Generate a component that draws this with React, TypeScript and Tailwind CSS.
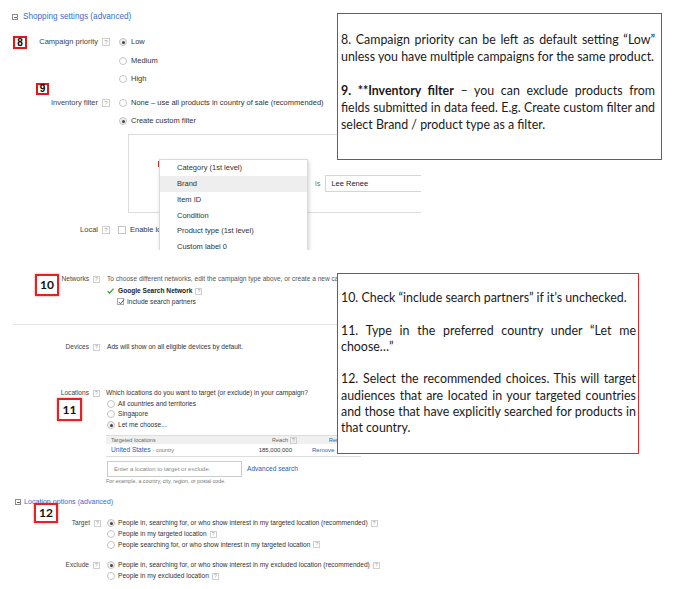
import React from "react";

const UI = "font-['Liberation_Sans',Arial,sans-serif]";
const NOTE = "font-['Lato','Open_Sans',sans-serif]";

function Q8() {
  return (
    <span className="inline-flex h-[8px] w-[8px] shrink-0 items-center justify-center border border-[#cfcfcf] text-[6px] leading-none text-[#9a9a9a]">
      ?
    </span>
  );
}

function Q7() {
  return (
    <span className="inline-flex h-[7px] w-[7px] shrink-0 items-center justify-center border border-[#cfcfcf] text-[5px] leading-none text-[#9a9a9a]">
      ?
    </span>
  );
}

function Radio({ on }: { on?: boolean }) {
  return (
    <span
      className={
        on
          ? "flex h-[8px] w-[8px] shrink-0 items-center justify-center rounded-full border border-[#c4c4c4] bg-[#eeeeee]"
          : "flex h-[8px] w-[8px] shrink-0 items-center justify-center rounded-full border border-[#c4c4c4] bg-white"
      }
    >
      {on && <span className="h-[3px] w-[3px] rounded-full bg-[#444]" />}
    </span>
  );
}

function MinusBox() {
  return (
    <span className="flex h-[6px] w-[6px] shrink-0 items-center justify-center border border-[#8a8a8a]">
      <span className="h-px w-[3px] bg-[#666]" />
    </span>
  );
}

function Badge({ className, children }: { className: string; children: React.ReactNode }) {
  return <div className={className}>{children}</div>;
}

const just = "w-full whitespace-nowrap text-justify [text-align-last:justify]";

export default function App() {
  return (
    <div className={`relative h-[589px] w-[676px] overflow-hidden bg-white ${UI}`}>
      {/* ---------- Part 1: shopping settings ---------- */}
      <div className="relative h-[250px] w-[421px] overflow-hidden text-[7.5px] text-[#333]">
        <div className="mt-[12px] flex h-[10px] items-center pl-[12px]">
          <MinusBox />
          <span className="ml-[5px] text-[8.2px] text-[#3b6bd0]">Shopping settings (advanced)</span>
        </div>

        <div className="mt-[14px] flex h-[12px] items-center">
          <div className="w-[98px] text-right text-[#444]">Campaign priority</div>
          <div className="ml-[4px]"><Q8 /></div>
          <div className="ml-[9px] flex items-center gap-[4px]"><Radio on /><span>Low</span></div>
        </div>
        <div className="mt-[7px] flex h-[12px] items-center">
          <div className="ml-[119px] flex items-center gap-[4px]"><Radio /><span>Medium</span></div>
        </div>
        <div className="mt-[6px] flex h-[12px] items-center">
          <div className="ml-[119px] flex items-center gap-[4px]"><Radio /><span>High</span></div>
        </div>
        <div className="mt-[12px] flex h-[12px] items-center">
          <div className="w-[98px] text-right text-[#444]">Inventory filter</div>
          <div className="ml-[4px]"><Q8 /></div>
          <div className="ml-[9px] flex items-center gap-[4px] whitespace-nowrap">
            <Radio />
            <span>None – use all products in country of sale (recommended)</span>
          </div>
        </div>
        <div className="mt-[6px] flex h-[12px] items-center">
          <div className="ml-[119px] flex items-center gap-[4px]"><Radio on /><span>Create custom filter</span></div>
        </div>

        <div className="ml-[128px] mt-[7px] h-[79px] w-[320px] border border-[#dcdcdc]">
          <div className="ml-[29px] mt-[26px] h-[6px] w-px bg-[#c0392b]" />
          <div className="mt-[8px] flex h-[17px] items-center">
            <span className="ml-[186px] text-[#777]">is</span>
            <div className="ml-[5px] flex h-[17px] w-[120px] items-center border border-[#d5d5d5] pl-[5px] text-[#222]">
              Lee Renee
            </div>
          </div>
        </div>

        <div className="mt-[11px] flex h-[12px] items-center">
          <div className="w-[98px] text-right text-[#444]">Local</div>
          <div className="ml-[4px]"><Q8 /></div>
          <div className="ml-[8px] flex items-center gap-[4px] whitespace-nowrap">
            <span className="h-[8px] w-[8px] shrink-0 border border-[#c4c4c4] bg-white" />
            <span className="w-[29px] overflow-hidden">Enable local inventory ads</span>
          </div>
        </div>

        {/* dropdown menu */}
        <div className="absolute left-[159px] top-[159px] h-[110px] w-[149px] border border-[#dadada] bg-white shadow-[1px_2px_4px_rgba(0,0,0,0.18)]">
          {[
            "Category (1st level)",
            "Brand",
            "Item ID",
            "Condition",
            "Product type (1st level)",
            "Custom label 0",
          ].map((t) => (
            <div
              key={t}
              className={
                t === "Brand"
                  ? "flex h-[15.8px] items-center bg-[#eeeeee] pl-[17px] text-[#333]"
                  : "flex h-[15.8px] items-center pl-[17px] text-[#333]"
              }
            >
              {t}
            </div>
          ))}
        </div>
      </div>

      {/* ---------- Part 2: networks / locations ---------- */}
      <div className="relative h-[339px] text-[6.6px] text-[#333]">
        <div className="mt-[23px] flex">
          <div className="flex h-[12px] w-[89px] items-center justify-end text-[#444]">Networks</div>
          <div className="ml-[4px] flex h-[12px] items-center"><Q7 /></div>
          <div className="ml-[7px] flex flex-col">
            <div className="flex h-[12px] items-center whitespace-nowrap text-[#555]">
              To choose different networks, edit the campaign type above, or create a new campaign.
            </div>
            <div className="flex h-[12px] items-center">
              <svg width="7" height="6" viewBox="0 0 7 6" className="shrink-0">
                <path d="M0.6 3.2 L2.6 5.2 L6.5 0.6" fill="none" stroke="#2e9e3a" strokeWidth="1.2" />
              </svg>
              <span className="ml-[4px] font-bold text-[#222]">Google Search Network</span>
              <span className="ml-[3px]"><Q7 /></span>
            </div>
            <div className="flex h-[9px] items-center pl-[10px]">
              <span className="relative h-[7px] w-[7px] shrink-0 border border-[#aaa] bg-white">
                <svg width="7" height="6" viewBox="0 0 7 6" className="absolute left-0 top-0">
                  <path d="M0.8 3 L2.6 4.8 L6.2 0.4" fill="none" stroke="#444" strokeWidth="0.9" />
                </svg>
              </span>
              <span className="ml-[3px]">Include search partners</span>
            </div>
          </div>
        </div>

        <div className="ml-[13px] mt-[18px] h-px w-[345px] bg-[#e6e6e6]" />

        <div className="mt-[16px] flex h-[12px] items-center">
          <div className="w-[89px] text-right text-[#444]">Devices</div>
          <div className="ml-[4px] flex items-center"><Q7 /></div>
          <div className="ml-[7px] whitespace-nowrap">Ads will show on all eligible devices by default.</div>
        </div>

        <div className="mt-[34px] flex">
          <div className="flex h-[12px] w-[89px] items-center justify-end text-[#444]">Locations</div>
          <div className="ml-[4px] flex h-[12px] items-center"><Q7 /></div>
          <div className="ml-[6px] flex flex-col">
            <div className="flex h-[12px] items-center whitespace-nowrap">
              Which locations do you want to target (or exclude) in your campaign?
            </div>
            <div className="flex h-[10px] items-center gap-[3px] pl-[1px]"><Radio /><span>All countries and territories</span></div>
            <div className="flex h-[10px] items-center gap-[3px] pl-[1px]"><Radio /><span>Singapore</span></div>
            <div className="flex h-[12px] items-center gap-[3px] pl-[1px]"><Radio on /><span>Let me choose...</span></div>

            <div className="mt-[4px] w-[255px]">
              <div className="flex h-[9px] items-center border-t border-[#dddddd] bg-[#f0f0f0] text-[5.5px] text-[#666]">
                <span className="w-[150px] pl-[5px]">Targeted locations</span>
                <span className="flex w-[41px] items-center justify-end gap-[2px]">Reach <Q7 /></span>
                <span className="ml-[32px] text-[#2a5db0]">Remove all</span>
              </div>
              <div className="flex h-[13px] items-center border-b border-[#dddddd] whitespace-nowrap">
                <span className="w-[150px] pl-[5px]">
                  <span className="text-[#2a5db0]">United States</span>
                  <span className="ml-[2px] text-[5.5px] text-[#777]">- country</span>
                </span>
                <span className="w-[36px] text-right text-[6px]">185,000,000</span>
                <span className="ml-[20px] text-[6px] text-[#2a5db0]">Remove</span>
              </div>
            </div>

            <div className="mt-[4px] flex items-center">
              <div className="ml-px flex h-[16px] w-[135px] items-center border border-[#cccccc] pl-[6px] text-[6px] text-[#888] whitespace-nowrap">
                Enter a location to target or exclude.
              </div>
              <span className="ml-[5px] whitespace-nowrap text-[#2a5db0]">Advanced search</span>
            </div>
            <div className="mt-px flex h-[8px] items-center whitespace-nowrap text-[5.3px] text-[#777]">
              For example, a country, city, region, or postal code.
            </div>
          </div>
        </div>

        <div className="mt-[11px] flex h-[10px] items-center pl-[15px]">
          <MinusBox />
          <span className="ml-[3px] text-[7.1px] text-[#3b6bd0]">Location options (advanced)</span>
        </div>

        <div className="mt-[10px] flex">
          <div className="flex h-[12px] w-[90px] items-center justify-end text-[#444]">Target</div>
          <div className="ml-[4px] flex h-[12px] items-center"><Q7 /></div>
          <div className="ml-[6px] flex flex-col whitespace-nowrap">
            <div className="flex h-[12px] items-center gap-[3px]">
              <Radio on /><span>People in, searching for, or who show interest in my targeted location (recommended)</span><Q7 />
            </div>
            <div className="flex h-[10.5px] items-center gap-[3px]">
              <Radio /><span>People in my targeted location</span><Q7 />
            </div>
            <div className="flex h-[10.5px] items-center gap-[3px]">
              <Radio /><span>People searching for, or who show interest in my targeted location</span><Q7 />
            </div>
          </div>
        </div>

        <div className="mt-[9px] flex">
          <div className="flex h-[12px] w-[89px] items-center justify-end text-[#444]">Exclude</div>
          <div className="ml-[4px] flex h-[12px] items-center"><Q7 /></div>
          <div className="ml-[7px] flex flex-col whitespace-nowrap">
            <div className="flex h-[12px] items-center gap-[3px]">
              <Radio on /><span>People in, searching for, or who show interest in my excluded location (recommended)</span><Q7 />
            </div>
            <div className="flex h-[10px] items-center gap-[3px]">
              <Radio /><span>People in my excluded location</span><Q7 />
            </div>
          </div>
        </div>
      </div>

      {/* ---------- annotation boxes ---------- */}
      <div className={`absolute left-[337px] top-[13px] h-[147px] w-[325px] border border-[#e8262b] bg-white pl-[3px] pt-[17px] text-[12.4px] leading-[17px] text-[#1a1a1a] ${NOTE}`}>
        <div className="w-[314px]">
          <div className={just}>8. Campaign priority can be left as default setting “Low”</div>
          <div className="whitespace-nowrap">unless you have multiple campaigns for the same product.</div>
          <div className="h-[17px]" />
          <div className={just}>
            <span className="font-bold">9. **Inventory filter</span> – you can exclude products from
          </div>
          <div className={just}>fields submitted in data feed. E.g. Create custom filter and</div>
          <div className="whitespace-nowrap">select Brand / product type as a filter.</div>
        </div>
      </div>

      <div className={`absolute left-[337px] top-[273px] h-[181px] w-[302px] border border-[#e8262b] bg-white pl-[3px] pt-[16px] text-[12.4px] leading-[16.3px] text-[#1a1a1a] ${NOTE}`}>
        <div className="w-[295px]">
          <div className="whitespace-nowrap">10. Check “include search partners” if it’s unchecked.</div>
          <div className="h-[16.3px]" />
          <div className={just}>11. Type in the preferred country under “Let me</div>
          <div className="whitespace-nowrap">choose…”</div>
          <div className="h-[16.3px]" />
          <div className={just}>12. Select the recommended choices. This will target</div>
          <div className={just}>audiences that are located in your targeted countries</div>
          <div className={just}>and those that have explicitly searched for products in</div>
          <div className="whitespace-nowrap">that country.</div>
        </div>
      </div>

      {/* ---------- number badges ---------- */}
      <Badge className="absolute left-[13px] top-[36px] flex h-[13px] w-[14px] items-center justify-center border-2 border-[#e8141b] bg-white text-[10px] font-bold leading-none text-black">
        8
      </Badge>
      <Badge className="absolute left-[36px] top-[83px] flex h-[12px] w-[13px] items-center justify-center border-2 border-[#e8141b] bg-white text-[10px] font-bold leading-none text-black">
        9
      </Badge>
      <Badge className={`absolute left-[35px] top-[274px] flex h-[22px] w-[24px] items-center justify-center border-2 border-[#e52222] bg-white text-[12px] font-bold leading-none text-[#111] shadow-[0_0_2px_rgba(230,0,0,0.5)] ${NOTE}`}>
        10
      </Badge>
      <Badge className={`absolute left-[57px] top-[398px] flex h-[23px] w-[25px] items-center justify-center border-2 border-[#e52222] bg-white text-[12px] font-bold leading-none text-[#111] shadow-[0_0_2px_rgba(230,0,0,0.5)] ${NOTE}`}>
        11
      </Badge>
      <Badge className={`absolute left-[34px] top-[503px] flex h-[20px] w-[24px] items-center justify-center border-2 border-[#e52222] bg-white text-[12px] font-bold leading-none text-[#111] shadow-[0_0_2px_rgba(230,0,0,0.5)] ${NOTE}`}>
        12
      </Badge>
    </div>
  );
}
